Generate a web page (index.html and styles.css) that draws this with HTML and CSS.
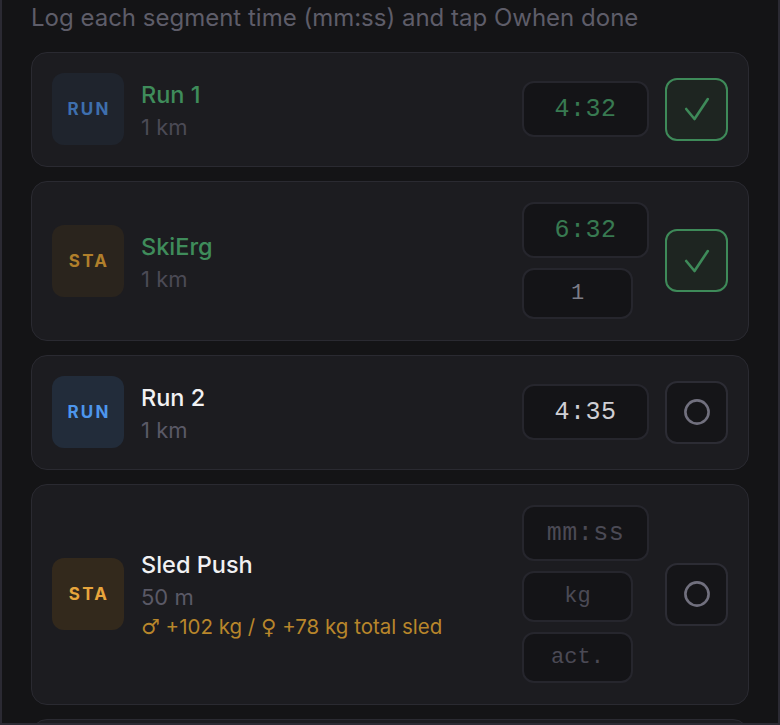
FILE: index.html
```html
<!DOCTYPE html>
<html lang="en">
<head>
<meta charset="utf-8">
<title>Segments</title>
<link rel="stylesheet" href="styles.css">
</head>
<body>
<div class="frame">
  <p class="hint">Log each segment time (mm:ss) and tap Owhen done</p>
  <div class="list">
    <div class="card">
      <div class="badge run done">RUN</div>
      <div class="info">
        <div class="title green">Run 1</div>
        <div class="sub">1 km</div>
      </div>
      <div class="controls">
        <div class="inputs">
          <div class="field time green">4:32</div>
        </div>
        <button class="tick checked"><svg viewBox="0 0 24 24" width="24" height="24"><path d="M1.2 12 L9.5 22 L22.8 2" /></svg></button>
      </div>
    </div>

    <div class="card">
      <div class="badge sta done">STA</div>
      <div class="info">
        <div class="title green">SkiErg</div>
        <div class="sub">1 km</div>
      </div>
      <div class="controls">
        <div class="inputs">
          <div class="field time green">6:32</div>
          <div class="field small grey">1</div>
        </div>
        <button class="tick checked"><svg viewBox="0 0 24 24" width="24" height="24"><path d="M1.2 12 L9.5 22 L22.8 2" /></svg></button>
      </div>
    </div>

    <div class="card">
      <div class="badge run">RUN</div>
      <div class="info">
        <div class="title">Run 2</div>
        <div class="sub active">1 km</div>
      </div>
      <div class="controls">
        <div class="inputs">
          <div class="field time white">4:35</div>
        </div>
        <button class="tick"><svg viewBox="0 0 28 28" width="28" height="28"><circle cx="14" cy="14" r="11.6" /></svg></button>
      </div>
    </div>

    <div class="card">
      <div class="badge sta">STA</div>
      <div class="info">
        <div class="title">Sled Push</div>
        <div class="sub active">50 m</div>
        <div class="extra"><span class="sym">♂</span> +102 kg / <span class="sym">♀</span> +78 kg total sled</div>
      </div>
      <div class="controls">
        <div class="inputs">
          <div class="field time ph">mm:ss</div>
          <div class="field small ph">kg</div>
          <div class="field small ph">act.</div>
        </div>
        <button class="tick"><svg viewBox="0 0 28 28" width="28" height="28"><circle cx="14" cy="14" r="11.6" /></svg></button>
      </div>
    </div>

    <div class="card next"></div>
  </div>
</div>
</body>
</html>
```

FILE: styles.css
```css
* { box-sizing: border-box; }
html, body { margin: 0; padding: 0; background: #141416; }
body { font-family: Inter, "Noto Sans", sans-serif; }

.frame {
  width: 780px;
  height: 725px;
  overflow: hidden;
  border: 2px solid #2b2a33;
  border-top: none;
  padding: 0 29px 0 29px;
  background: #141416;
}

.hint {
  margin: 0;
  padding-top: 3px;
  height: 52px;
  font-size: 24px;
  line-height: 29px;
  color: #5e5d69;
  font-weight: 400;
  letter-spacing: 0px;
}

.list {
  display: flex;
  flex-direction: column;
  gap: 14px;
}

.card {
  display: flex;
  align-items: center;
  gap: 17px;
  padding: 20px 20px 21px;
  background: #1c1c20;
  border: 1px solid #2a2a31;
  border-radius: 16px;
}
.card.next { height: 120px; flex: none; }

.badge {
  flex: none;
  width: 72px;
  height: 72px;
  border-radius: 12px;
  display: flex;
  align-items: center;
  justify-content: center;
  font-size: 17px;
  font-weight: 700;
  letter-spacing: 2.2px;
  padding-left: 2px;
}
.badge.run { background: #222c3a; color: #4d96ec; }
.badge.run.done { background: #1f242d; color: #3e6fae; }
.badge.sta { background: #33291c; color: #e8a53c; }
.badge.sta.done { background: #2a241d; color: #b07f2b; }

.info { display: flex; flex-direction: column; padding-top: 4px; }
.title {
  font-size: 23.5px;
  font-weight: 500;
  line-height: 30px;
  color: #f1f1f3;
}
.title.green { color: #3f8c5b; }
.sub {
  margin-top: 2px;
  font-size: 22px;
  line-height: 30px;
  color: #4b4a55;
}
.sub.active { color: #5a5966; }
.extra {
  font-size: 20.5px;
  line-height: 30px;
  color: #b8862b;
}
.extra .sym { font-family: "DejaVu Sans", sans-serif; font-size: 21px; }

.controls {
  margin-left: auto;
  display: flex;
  align-items: center;
  gap: 16px;
}
.inputs {
  display: flex;
  flex-direction: column;
  align-items: flex-start;
  gap: 10px;
}
.field {
  display: flex;
  align-items: center;
  justify-content: center;
  background: #141417;
  border: 2px solid #26262d;
  border-radius: 12px;
  font-family: "Liberation Mono", "Courier New", monospace;
}
.field.time {
  width: 127px;
  height: 56px;
  font-size: 25px;
  letter-spacing: 0.5px;
}
.field.small {
  width: 111px;
  height: 51px;
  font-size: 22px;
}
.green { color: #3f8c5b; }
.field.green { color: #387a51; }
.field.white { color: #cfcfd4; }
.field.grey { color: #7d7d87; }
.field.ph { color: #4b4a55; }

.tick {
  width: 63px;
  height: 63px;
  padding: 0;
  border-radius: 12px;
  background: #151518;
  border: 2px solid #2c2c34;
  display: flex;
  align-items: center;
  justify-content: center;
}
.tick svg { overflow: visible; }
.tick circle { fill: none; stroke: #71707e; stroke-width: 2.6; }
.tick.checked {
  background: #1e2521;
  border-color: #3e8a59;
}
.tick.checked path {
  fill: none;
  stroke: #3e8a59;
  stroke-width: 2.6;
  stroke-linecap: round;
  stroke-linejoin: round;
}
```
